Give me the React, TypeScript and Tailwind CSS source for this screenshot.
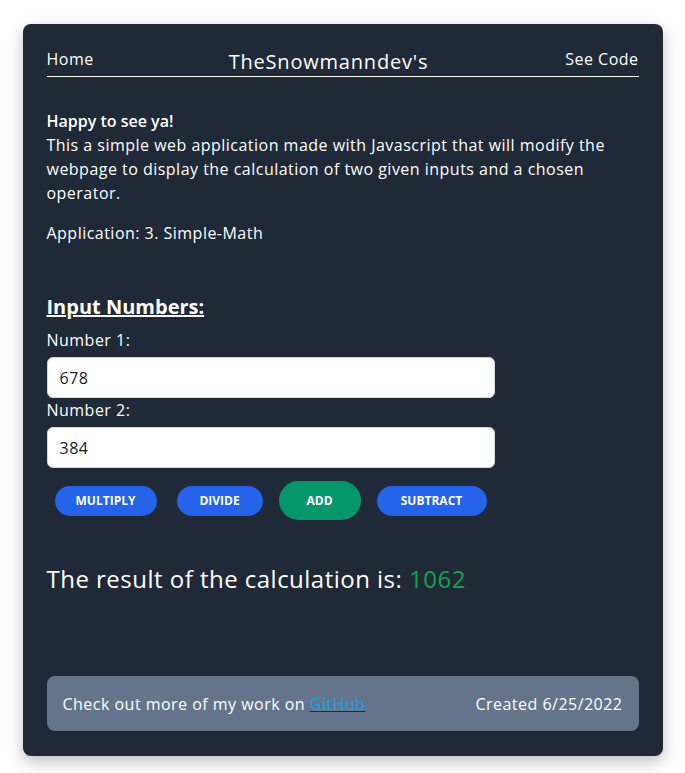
import React, { useState } from 'react';

const App: React.FC = () => {
  const [a, setA] = useState('678');
  const [b, setB] = useState('384');
  const [result, setResult] = useState<number>(1062);

  const calc = (op: string) => {
    const x = parseFloat(a) || 0;
    const y = parseFloat(b) || 0;
    if (op === 'multiply') setResult(x * y);
    if (op === 'divide') setResult(x / y);
    if (op === 'add') setResult(x + y);
    if (op === 'subtract') setResult(x - y);
  };

  return (
    <div
      className="min-h-screen bg-white pt-6 pb-4 tracking-[0.03em]"
      style={{ fontFamily: '"Open Sans", "Noto Sans", sans-serif' }}
    >
      <div className="mx-auto w-[640px] bg-[#1f2937] rounded-lg shadow-[0_6px_16px_rgba(0,0,0,0.25)] px-6 pt-6 pb-[25px] text-white">
        {/* Nav */}
        <div className="flex items-end justify-between border-b border-white">
          <a className="mb-[5px] text-base leading-[23px]">Home</a>
          <h1 className="text-xl leading-7 tracking-[0.04em] -translate-x-px">TheSnowmanndev's</h1>
          <a className="mb-[5px] text-base leading-[23px]">See Code</a>
        </div>

        {/* Intro */}
        <div className="mt-8">
          <p className="text-base leading-6 font-semibold tracking-normal">Happy to see ya!</p>
          <p className="text-base leading-6">
            This a simple web application made with Javascript that will modify the webpage to display the calculation of two given inputs and a chosen operator.
          </p>
          <p className="mt-4 text-base leading-6">Application: 3. Simple-Math</p>
        </div>

        {/* Inputs */}
        <div className="mt-12">
          <h2 className="text-xl leading-7 font-bold underline tracking-normal">Input Numbers:</h2>
          <label className="block mt-[7px] mb-[5px] text-base leading-6">Number 1:</label>
          <input
            value={a}
            onChange={(e) => setA(e.target.value)}
            className="block w-[448px] h-[41px] rounded-md bg-white px-3 text-base text-gray-900 border border-gray-300 outline-none"
          />
          <label className="block mb-[5px] text-base leading-6">Number 2:</label>
          <input
            value={b}
            onChange={(e) => setB(e.target.value)}
            className="block w-[448px] h-[41px] rounded-md bg-white px-3 text-base text-gray-900 border border-gray-300 outline-none"
          />
          <div className="mt-[13px] flex items-center pl-2 tracking-normal">
            <button onClick={() => calc('multiply')} className="w-[102px] h-[30px] rounded-full bg-[#2563eb] text-xs font-bold">
              MULTIPLY
            </button>
            <button onClick={() => calc('divide')} className="ml-5 w-[86px] h-[30px] rounded-full bg-[#2563eb] text-xs font-bold">
              DIVIDE
            </button>
            <button onClick={() => calc('add')} className="ml-4 w-[82px] h-[39px] rounded-full bg-[#059669] text-xs font-bold">
              ADD
            </button>
            <button onClick={() => calc('subtract')} className="ml-4 w-[110px] h-[30px] rounded-full bg-[#2563eb] text-xs font-bold">
              SUBTRACT
            </button>
          </div>
        </div>

        {/* Result */}
        <p className="mt-[43px] text-2xl leading-8">
          The result of the calculation is: <span className="text-[#16a34a]">{result}</span>
        </p>

        {/* Footer */}
        <div className="mt-[81px] flex items-center justify-between rounded-lg bg-[#64748b] px-4 h-[55px]">
          <p className="text-base">
            Check out more of my work on <a className="text-[#0ea5e9] underline decoration-gray-800">GitHub</a>
          </p>
          <p className="text-base">Created 6/25/2022</p>
        </div>
      </div>
    </div>
  );
};

export default App;
